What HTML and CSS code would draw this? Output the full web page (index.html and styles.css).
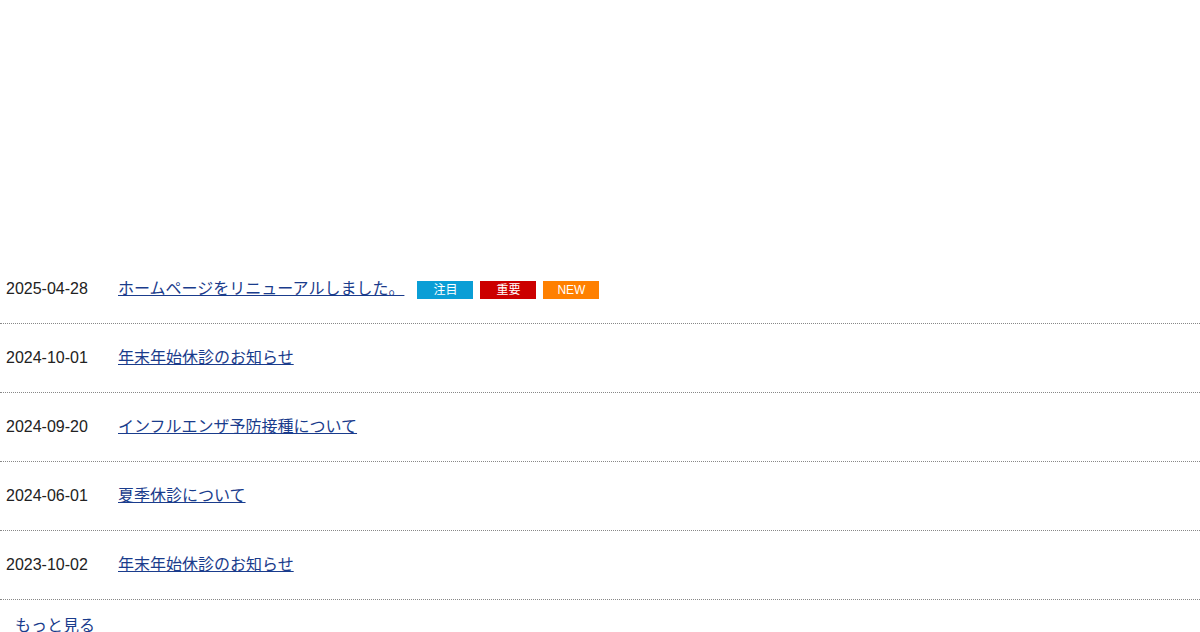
FILE: index.html
```html
<!DOCTYPE html>
<html lang="ja">
<head>
  <meta charset="UTF-8" />
  <meta name="viewport" content="width=device-width, initial-scale=1.0"/>
  <title>お知らせ</title>
  <link rel="stylesheet" href="styles.css">
</head>
<body>
  <section class="news">
    <ul class="news-list">
      <li class="news-item">
        <span class="news-date">2025-04-28</span>
        <a class="news-title" href="#">ホームページをリニューアルしました。</a>
        <span class="tag tag-attention">注目</span>
        <span class="tag tag-important">重要</span>
        <span class="tag tag-new">NEW</span>
      </li>
      <li class="news-item">
        <span class="news-date">2024-10-01</span>
        <a class="news-title" href="#">年末年始休診のお知らせ</a>
      </li>
      <li class="news-item">
        <span class="news-date">2024-09-20</span>
        <a class="news-title" href="#">インフルエンザ予防接種について</a>
      </li>
      <li class="news-item">
        <span class="news-date">2024-06-01</span>
        <a class="news-title" href="#">夏季休診について</a>
      </li>
      <li class="news-item">
        <span class="news-date">2023-10-02</span>
        <a class="news-title" href="#">年末年始休診のお知らせ</a>
      </li>
    </ul>
    <p class="more"><a href="#">もっと見る</a></p>
  </section>
</body>
</html>
```

FILE: styles.css
```css
* { box-sizing: border-box; }

body {
  margin: 0;
  font-family: "Liberation Sans", "Noto Sans CJK JP", sans-serif;
  font-size: 16px;
  color: #222;
  background: #fff;
}

.news {
  padding-top: 255px;
}

.news-list {
  list-style: none;
  margin: 0;
  padding: 0;
}

.news-item {
  display: flex;
  align-items: center;
  height: 69px;
  padding: 0 6px 1px;
  border-bottom: 1px dotted #888;
  line-height: 20px;
}

.news-date {
  width: 112px;
  flex-shrink: 0;
  font-size: 16px;
}

.news-title {
  color: #1a3c8c;
  text-decoration: underline;
}

.tag {
  display: inline-block;
  width: 56px;
  height: 18px;
  margin-top: 2px;
  margin-left: 7px;
  color: #fff;
  font-size: 12px;
  line-height: 18px;
  text-align: center;
}

.news-title + .tag { margin-left: 13px; }

.tag-attention { background: #0a9ed6; }
.tag-important { background: #cc0000; }
.tag-new { background: #ff8000; }

.more {
  margin: 0;
  padding: 16px 15px;
  line-height: 20px;
}

.more a {
  color: #1a3c8c;
  text-decoration: none;
}
```
